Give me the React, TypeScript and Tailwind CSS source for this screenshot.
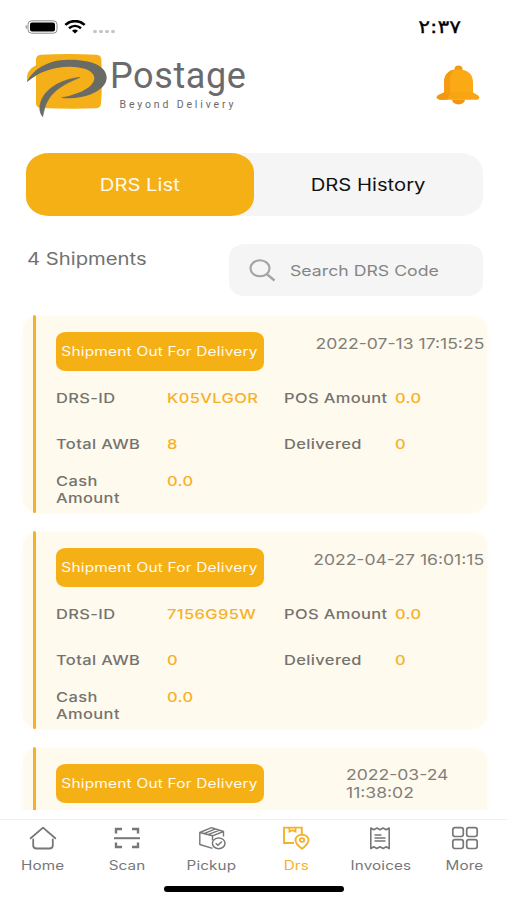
import type { ReactNode } from "react";
import clsx from "clsx";

interface Shipment {
  date: string;
  id: string;
  pos: string;
  awb: string;
  delivered: string;
  cash: string;
}

const shipments: Shipment[] = [
  { date: "2022-07-13 17:15:25", id: "K05VLGOR", pos: "0.0", awb: "8", delivered: "0", cash: "0.0" },
  { date: "2022-04-27 16:01:15", id: "7156G95W", pos: "0.0", awb: "0", delivered: "0", cash: "0.0" },
  { date: "2022-03-24 11:38:02", id: "", pos: "", awb: "", delivered: "", cash: "" },
];

interface TextProps {
  children: ReactNode;
  className?: string;
}

// extended-width lettering used everywhere in the app
function Wide({ children, className }: TextProps) {
  return (
    <span className={clsx("inline-block scale-x-[1.22] whitespace-nowrap", className)}>
      {children}
    </span>
  );
}

function StatusBar() {
  return (
    <div className="flex h-[53px] items-center justify-between pr-[46px] pl-[25px]">
      <div className="flex items-center">
        <svg width="33" height="14" viewBox="0 0 33 14">
          <path d="M1.6 5v4C.2 8.500.2 5.500 1.600 5Z" fill="#777" />
          <rect x="3" y=".8" width="29" height="12.400" rx="3.600" fill="none" stroke="#8a8a8a" />
          <rect x="5" y="2.600" width="25" height="8.800" rx="2" />
        </svg>
        <svg width="22" height="14" viewBox="0 0 22 14" className="ml-[6px]" fill="none" stroke="#000">
          <path d="M1.300 4.900C7-.2 15-.2 20.700 4.900" strokeWidth="2.600" />
          <path d="M5 8.300c3.600-3 8.400-3 12 0" strokeWidth="2.500" />
          <path d="M8 10.700c2-1.600 4-1.600 6 0L11 13.500Z" fill="#000" stroke="none" />
        </svg>
        <div className="mt-[9px] ml-[7px] flex gap-[2.500px]">
          {[0, 1, 2, 3].map((dot) => (
            <span key={dot} className="h-[3px] w-[3.500px] rounded-full bg-[#c4c4c4]" />
          ))}
        </div>
      </div>
      <span className="origin-right scale-x-[1.22] font-['DejaVu_Sans',sans-serif] text-[18px] [-webkit-text-stroke:0.300px_#000]">
        ٢:٣٧
      </span>
    </div>
  );
}

function Logo() {
  return (
    <div className="flex">
      <svg width="83" height="65" viewBox="75 160 249 195">
        <path
          d="M122 165Q206 161 290 165Q304 166 304 180Q308 250 303 312Q302 325 288 326Q210 329 122 325Q108 324 108 310V228L81 246Q77 211 108 197V180Q108 166 122 165Z"
          fill="#f5b019"
        />
        <path
          d="M80 248C98 209 143 181 203 180C272 179 320 198 320 234C319 265 281 284 244 292C222 296 200 297 182 294C229 286 285 265 283 233C280 211 246 201 209 201C160 202 115 216 80 248Z"
          fill="#6b6b65"
        />
        <path
          d="M240 233C188 238 145 263 129 292C116 315 117 337 128 351C132 335 133 320 145 300C162 271 194 252 240 233Z"
          fill="#6b6b65"
          stroke="#6b6b65"
          strokeWidth="2"
        />
      </svg>
      <div className="ml-[2px] flex flex-col pt-[2px] font-[Roboto,sans-serif] text-[#6a6a6d]">
        <span className="text-[36px] leading-[42px] tracking-[0.600px]">Postage</span>
        <span className="mt-[2px] ml-[9.500px] text-[10.500px] leading-3 tracking-[2.850px] whitespace-nowrap">
          Beyond Delivery
        </span>
      </div>
    </div>
  );
}

function Bell() {
  return (
    <svg width="46" height="41" viewBox="0 0 46 41">
      <path d="M17 34.500h13a6.500 5 0 0 1-13 0Z" fill="#f2960f" />
      <path d="M19.500 4a4 3.500 0 0 1 8 0v3h-8Z" fill="#f39a14" />
      <path d="M9 31V18C9 9 14 4.500 23.500 4.500S38 9 38 18v13Z" fill="#fbaa15" />
      <path d="M9 31V18C9 9 14 4.500 21 4.500 16 7 15 12 15 18v10l-2 3Z" fill="#f49b12" />
      <path d="M9 27.500h29l4.500 2.500q3.500 2.500 0 4.800H4.500Q-.5 32.500 3.500 30Z" fill="#f9a414" />
      <path d="M9 27.500h6L12 34.800H4.500Q-.5 32.500 3.500 30Z" fill="#f19711" />
    </svg>
  );
}

function Field({ label, value }: { label: ReactNode; value: string }) {
  return (
    <>
      <Wide className="origin-left text-[#75736e]">{label}</Wide>
      <Wide className="origin-left text-[#f5b12a]">{value}</Wide>
    </>
  );
}

function ShipmentCard({ shipment, last }: { shipment: Shipment; last?: boolean }) {
  return (
    <article className="relative ml-[23px] h-[197px] w-[464px] shrink-0 rounded-[17px/14px] bg-[#fffaee] pl-[33px] shadow-[0_0_4px_rgba(255,250,238,0.7)]">
      <div className="absolute -top-px bottom-0 left-[9.500px] w-[3px] rounded-full bg-[#f3b02c]" />
      <div className="flex justify-between pt-[15.500px]">
        <div className="flex h-[39px] w-[208px] items-center justify-center rounded-[10px/8px] bg-[#f5b016]">
          <Wide className="mt-px mr-px text-[12.700px] tracking-[0.150px] text-[#fffaf0]">
            Shipment Out For Delivery
          </Wide>
        </div>
        {last ? (
          <Wide className="mt-[2px] mr-[57px] origin-left text-[14.400px] leading-[18px] text-[#817f7a]">
            {shipment.date.split(" ")[0]}
            <br />
            {shipment.date.split(" ")[1]}
          </Wide>
        ) : (
          <Wide className="mt-[3px] mr-[2.500px] origin-right text-[14.400px] leading-[18px] text-[#817f7a]">
            {shipment.date}
          </Wide>
        )}
      </div>
      {!last && (
        <div className="mt-[19.500px] grid grid-cols-[111px_117px_111px_1fr] grid-rows-[46px_37px_34px] text-[13.500px] leading-[17px] font-medium tracking-[0.300px]">
          <Field label="DRS-ID" value={shipment.id} />
          <Field label="POS Amount" value={shipment.pos} />
          <Field label="Total AWB" value={shipment.awb} />
          <Field label="Delivered" value={shipment.delivered} />
          <Field
            label={
              <>
                Cash
                <br />
                Amount
              </>
            }
            value={shipment.cash}
          />
        </div>
      )}
    </article>
  );
}

function NavItem({ label, icon, active }: { label: string; icon: ReactNode; active?: boolean }) {
  return (
    <button
      className={clsx(
        "flex flex-1 flex-col items-center pt-[6px]",
        active ? "text-[#f5b12a]" : "text-[#77777a]"
      )}
    >
      <svg width="28" height="24" viewBox="0 0 28 24" fill="none" stroke="currentColor" strokeWidth="1.700">
        {icon}
      </svg>
      <Wide className="mt-[8px] text-[12.500px] leading-4 tracking-[0.100px]">{label}</Wide>
    </button>
  );
}

function BottomNav() {
  return (
    <nav className="flex h-[81px] border-t border-[#f1f1f1] bg-white pl-px">
      <NavItem
        label="Home"
        icon={
          <path
            d="M1.700 12.300 14 1.600l12.300 10.700M4.200 13.500v6q0 3 3.500 3h12.600q3.500 0 3.500-3v-6"
            strokeWidth="1.800"
            strokeLinecap="round"
            strokeLinejoin="round"
          />
        }
      />
      <NavItem
        label="Scan"
        icon={
          <>
            <path d="M3 7.500V3h6M19 3h6v4.500M25 16.500V21h-6M9 21H3v-4.500" strokeWidth="2.400" />
            <path d="M1 12.200h26" strokeWidth="2" />
          </>
        }
      />
      <NavItem
        label="Pickup"
        icon={
          <>
            <path
              d="M14.500 22.300 1.800 18.500V6.500L13.500 1.600l12 3.900v5M1.800 6.500l12.700 3.300 11-4.300M14.500 9.800v4.500M6 7.600l11.500-4.700M10 8.600l11.700-4.500"
              strokeWidth="1.400"
              strokeLinejoin="round"
            />
            <ellipse cx="20.700" cy="17.300" rx="6.300" ry="5.400" strokeWidth="1.500" />
            <path d="m17.700 17.300 2.200 2 4-3.800" strokeWidth="1.500" />
          </>
        }
      />
      <NavItem
        label="Drs"
        active
        icon={
          <>
            <path d="M12 17H2V1.600h17.800v6.500M7.500 1.600v4l3-1.400 3 1.400v-4" strokeWidth="1.900" />
            <path
              d="M20 22.700c-4.500-3.300-6.500-5.700-6.500-8.500 0-3.400 2.900-5.500 6.500-5.500s6.500 2.100 6.500 5.500c0 2.800-2 5.200-6.500 8.500Z"
              strokeWidth="1.900"
            />
            <ellipse cx="20" cy="14" rx="2.200" ry="1.800" strokeWidth="1.800" />
          </>
        }
      />
      <NavItem
        label="Invoices"
        icon={
          <>
            <path
              d="M4.800 2v20.500l3-1.800 3.100 1.800 3.100-1.800 3.100 1.800 3.100-1.800 3 1.800V2l-3 1.800L17.100 2 14 3.800 10.900 2 7.800 3.800Z"
              strokeWidth="1.600"
              strokeLinejoin="round"
            />
            <path d="M8.500 9h7M8.500 12h11M8.500 15h11" strokeWidth="1.400" />
          </>
        }
      />
      <NavItem
        label="More"
        icon={
          <>
            <rect x="1.800" y="1.700" width="10.500" height="8.800" rx="2.200" />
            <rect x="15.700" y="1.700" width="10.500" height="8.800" rx="2.200" />
            <rect x="1.800" y="13.700" width="10.500" height="8.800" rx="2.200" />
            <rect x="15.700" y="13.700" width="10.500" height="8.800" rx="2.200" />
          </>
        }
      />
    </nav>
  );
}

export default function App() {
  return (
    <div className="relative flex h-[900px] w-[507px] flex-col overflow-hidden bg-white font-[Inter,sans-serif]">
      <StatusBar />

      <header className="flex h-[100px] items-start justify-between pr-[26px] pl-[25px]">
        <Logo />
        <div className="mt-[12px]">
          <Bell />
        </div>
      </header>

      <div className="mx-[26px] flex h-[63px] w-[457px] shrink-0 rounded-[23px/19px] bg-[#f5f5f5] text-[16.600px]">
        <button className="w-[228px] rounded-[23px/19px] bg-[#f5b016] pt-px text-[#fffaf0]">
          <Wide>DRS List</Wide>
        </button>
        <button className="flex-1 pt-px text-[#111]">
          <Wide>DRS History</Wide>
        </button>
      </div>

      <div className="flex h-[99px] shrink-0 items-start justify-between pt-7 pr-6 pl-[26.500px]">
        <Wide className="mt-[4px] origin-left text-[16.600px] leading-[22px] text-[#717171]">4 Shipments</Wide>
        <div className="flex h-[52px] w-[254.500px] items-center rounded-[16px/13px] bg-[#f5f5f5] pl-[20px]">
          <svg width="27" height="23" viewBox="0 0 27 23" fill="none" stroke="#a3a3a3" strokeWidth="2.100">
            <ellipse cx="11" cy="9.300" rx="9.500" ry="8" />
            <path d="m17.500 14.800 8 6.700" strokeWidth="2.400" />
          </svg>
          <Wide className="mt-px ml-[14.500px] origin-left text-[14.500px] text-[#858585]">Search DRS Code</Wide>
        </div>
      </div>

      <main className="-mt-1 flex h-[499px] shrink-0 flex-col gap-[19px] overflow-hidden pt-[5px]">
        {shipments.map((shipment, index) => (
          <ShipmentCard key={shipment.date} shipment={shipment} last={index === 2} />
        ))}
      </main>

      <div className="mt-auto">
        <BottomNav />
      </div>
      <div className="absolute bottom-[8.500px] left-[164px] h-[5.500px] w-[180px] rounded-full bg-black" />
    </div>
  );
}
